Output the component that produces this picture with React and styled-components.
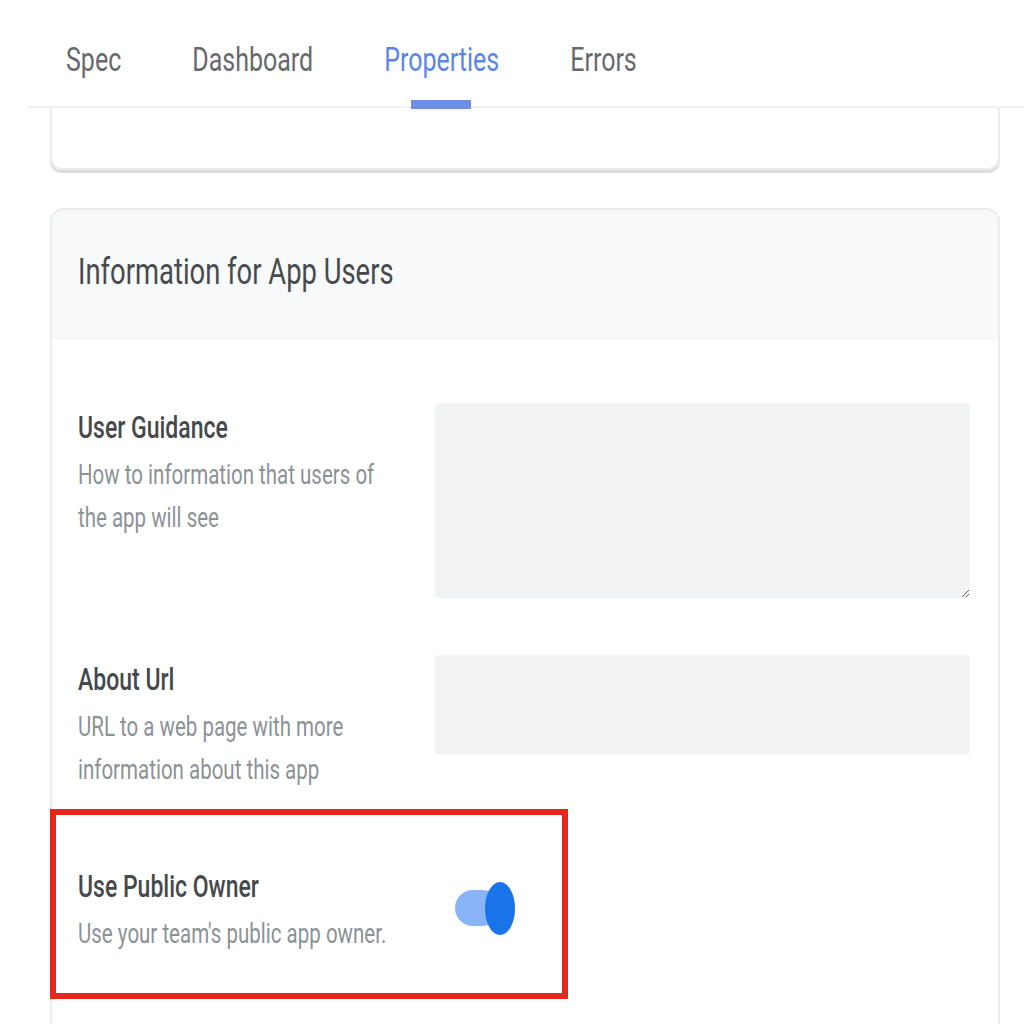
import styled, { createGlobalStyle } from "styled-components";

const GlobalStyle = createGlobalStyle`
  body {
    margin: 0;
    background: #ffffff;
    font-family: Roboto, "Noto Sans", "Liberation Sans", sans-serif;
  }
`

const Page = styled.div`
  width: 1024px;
  height: 1024px;
  overflow: hidden;
`

const TabBar = styled.nav`
  display: flex;
  gap: 71px;
  height: 108px;
  margin-left: 28px;
  padding-left: 38px;
  box-sizing: border-box;
  border-bottom: 2px solid #f1f1f1;
`

const Tab = styled.div`
  display: flex;
  flex-direction: column;
  align-items: center;
  padding-top: 42px;
  font-size: 25px;
  line-height: 36px;
  color: ${p => (p.$active ? "#5a86e6" : "#666a6e")};
`

const TabLabel = styled.span`
  display: block;
  transform: scaleY(1.35);
`

const Indicator = styled.div`
  margin: auto 2px -3px 0;
  width: 60px;
  height: 9px;
  background: #6c8ee3;
`

const CollapsedCard = styled.div`
  margin: 0 24px 0 50px;
  height: 60px;
  border: 2px solid #ececec;
  border-top: none;
  border-radius: 0 0 12px 12px;
  box-shadow: 0 3px 1px rgba(0, 0, 0, 0.14);
`

const Card = styled.section`
  margin: 38px 24px 0 50px;
  border: 2px solid #ececec;
  border-radius: 14px;
`

const CardHeader = styled.header`
  height: 130px;
  display: flex;
  align-items: center;
  padding: 0 0 6px 26px;
  box-sizing: border-box;
  background: #f8f9fa;
  border-radius: 12px 12px 0 0;
`

const CardTitle = styled.h2`
  margin: 0;
  font-size: 27.4px;
  font-weight: 400;
  color: #474a4d;
  transform: scaleY(1.35);
`

const CardBody = styled.div`
  padding: 63px 28px 60px 26px;
`

const Row = styled.div`
  display: grid;
  grid-template-columns: 357px 1fr;
  margin-bottom: 57px;
`

const LabelBlock = styled.div`
  padding-top: 1px;
  transform: scaleY(1.35);
  transform-origin: 0 0;
`

const Label = styled.div`
  font-size: 23px;
  font-weight: 500;
  line-height: 35.6px;
  color: #46494c;
`

const Desc = styled.div`
  max-width: 330px;
  font-size: 20.5px;
  line-height: 32.6px;
  color: #8c9196;
`

const TextArea = styled.textarea`
  display: block;
  width: 100%;
  height: 195px;
  box-sizing: border-box;
  border: none;
  border-radius: 4px;
  background: #f1f3f4;
  resize: vertical;
`

const Input = styled.input`
  display: block;
  width: 100%;
  height: 100px;
  box-sizing: border-box;
  border: none;
  border-radius: 4px;
  background: #f1f3f4;
`

const Highlight = styled.div`
  display: grid;
  grid-template-columns: 357px auto;
  align-items: start;
  width: 518px;
  height: 190px;
  box-sizing: border-box;
  margin: -5px 0 0 -28px;
  padding: 47px 0 0 22px;
  border: 6px solid #e6271d;
`

const Toggle = styled.div`
  display: flex;
  align-items: center;
  margin: 20px 0 0 20px;
  width: 60px;
  height: 53px;
`

const Track = styled.div`
  width: 45px;
  height: 36px;
  border-radius: 18px;
  background: #8ab4f8;
`

const Knob = styled.div`
  width: 30px;
  height: 53px;
  margin-left: -15px;
  border-radius: 50%;
  background: #1a73e8;
`

const tabs = ["Spec", "Dashboard", "Properties", "Errors"]

const App = () => {
  return (
    <Page>
      <GlobalStyle />
      <TabBar>
        {tabs.map(t => (
          <Tab key={t} $active={t === "Properties"}>
            <TabLabel>{t}</TabLabel>
            {t === "Properties" && <Indicator />}
          </Tab>
        ))}
      </TabBar>
      <CollapsedCard />
      <Card>
        <CardHeader>
          <CardTitle>Information for App Users</CardTitle>
        </CardHeader>
        <CardBody>
          <Row>
            <LabelBlock>
              <Label>User Guidance</Label>
              <Desc>How to information that users of the app will see</Desc>
            </LabelBlock>
            <TextArea />
          </Row>
          <Row>
            <LabelBlock>
              <Label>About Url</Label>
              <Desc>URL to a web page with more information about this app</Desc>
            </LabelBlock>
            <Input />
          </Row>
          <Highlight>
            <LabelBlock>
              <Label>Use Public Owner</Label>
              <Desc>Use your team's public app owner.</Desc>
            </LabelBlock>
            <Toggle>
              <Track />
              <Knob />
            </Toggle>
          </Highlight>
        </CardBody>
      </Card>
    </Page>
  )
}

export default App;
